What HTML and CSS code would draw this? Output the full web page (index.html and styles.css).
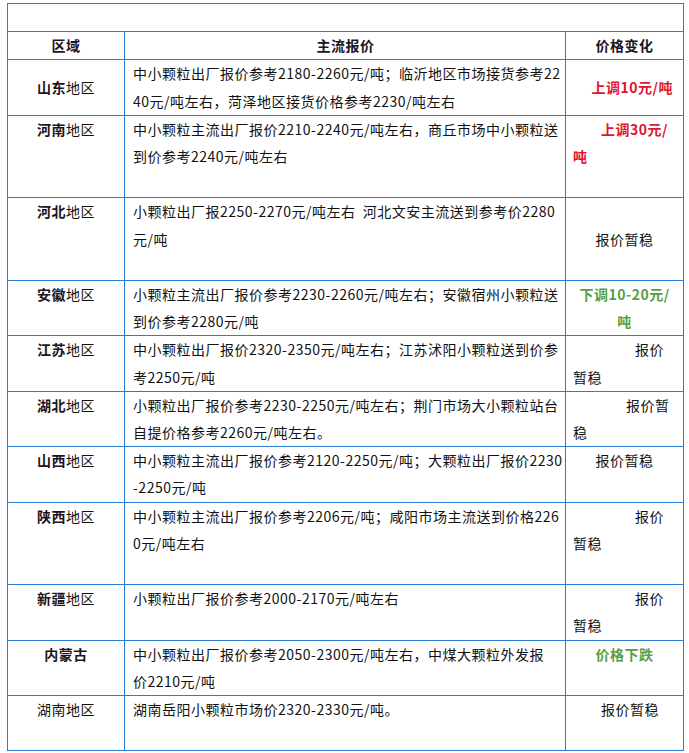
FILE: index.html
```html
<!DOCTYPE html>
<html lang="zh-CN">
<head>
<meta charset="utf-8">
<title>各地区价格</title>
<link rel="stylesheet" href="styles.css">
</head>
<body>
<table class="price">
  <colgroup>
    <col class="c1">
    <col class="c2">
    <col class="c3">
  </colgroup>
  <tr>
    <td class="title" colspan="3">&nbsp;</td>
  </tr>
  <tr class="head">
    <td class="reg">区域</td>
    <td class="main ctr">主流报价</td>
    <td class="chg ctr">价格变化</td>
  </tr>
  <tr class="mid">
    <td class="reg"><b>山东</b>地区</td>
    <td class="main">中小颗粒出厂报价参考2180-2260元/吨；临沂地区市场接货参考22<br>40元/吨左右，菏泽地区接货价格参考2230/吨左右</td>
    <td class="chg rgt up">上调10元/吨</td>
  </tr>
  <tr>
    <td class="reg"><b>河南</b>地区</td>
    <td class="main">中小颗粒主流出厂报价2210-2240元/吨左右，商丘市场中小颗粒送<br>到价参考2240元/吨左右<br>&nbsp;</td>
    <td class="chg ind2 up">上调30元/<br>吨</td>
  </tr>
  <tr>
    <td class="reg"><b>河北</b>地区</td>
    <td class="main">小颗粒出厂报2250-2270元/吨左右&nbsp; 河北文安主流送到参考价2280<br>元/吨<br>&nbsp;</td>
    <td class="chg ctr vmid">报价暂稳</td>
  </tr>
  <tr>
    <td class="reg"><b>安徽</b>地区</td>
    <td class="main">小颗粒主流出厂报价参考2230-2260元/吨左右；安徽宿州小颗粒送<br>到价参考2280元/吨</td>
    <td class="chg ctr down">下调10-20元/<br>吨</td>
  </tr>
  <tr>
    <td class="reg"><b>江苏</b>地区</td>
    <td class="main">中小颗粒出厂报价2320-2350元/吨左右；江苏沭阳小颗粒送到价参<br>考2250元/吨</td>
    <td class="chg ind4">报价<br>暂稳</td>
  </tr>
  <tr>
    <td class="reg"><b>湖北</b>地区</td>
    <td class="main">小颗粒出厂报价参考2230-2250元/吨左右；荆门市场大小颗粒站台<br>自提价格参考2260元/吨左右。</td>
    <td class="chg ind3">报价暂<br>稳</td>
  </tr>
  <tr>
    <td class="reg"><b>山西</b>地区</td>
    <td class="main">中小颗粒主流出厂报价参考2120-2250元/吨；大颗粒出厂报价2230<br>-2250元/吨</td>
    <td class="chg ctr">报价暂稳</td>
  </tr>
  <tr>
    <td class="reg"><b>陕西</b>地区</td>
    <td class="main">中小颗粒主流出厂报价参考2206元/吨；咸阳市场主流送到价格226<br>0元/吨左右<br>&nbsp;</td>
    <td class="chg ind4">报价<br>暂稳</td>
  </tr>
  <tr>
    <td class="reg"><b>新疆</b>地区</td>
    <td class="main">小颗粒出厂报价参考2000-2170元/吨左右</td>
    <td class="chg ind4">报价<br>暂稳</td>
  </tr>
  <tr>
    <td class="reg"><b>内蒙古</b></td>
    <td class="main">中小颗粒出厂报价参考2050-2300元/吨左右，中煤大颗粒外发报<br>价2210元/吨</td>
    <td class="chg ctr down">价格下跌</td>
  </tr>
  <tr>
    <td class="reg">湖南地区</td>
    <td class="main">湖南岳阳小颗粒市场价2320-2330元/吨。<br>&nbsp;</td>
    <td class="chg ind2">报价暂稳</td>
  </tr>
</table>
</body>
</html>
```

FILE: styles.css
```css
html, body {
  background: #ffffff;
}

body {
  margin: 3px 0 0 7px;
  font-family: "Noto Sans CJK SC", "Noto Sans", sans-serif;
  font-size: 14px;
  color: #111111;
}

.price {
  border-collapse: separate;
  border-spacing: 0;
  table-layout: fixed;
  width: 677px;
  border-top: 1px solid #2a7dd3;
  border-left: 1px solid #2a7dd3;
}

.price .c1 { width: 117px; }
.price .c2 { width: 441px; }
.price .c3 { width: 118px; }

.price td {
  border-right: 1px solid #2a7dd3;
  border-bottom: 1px solid #2a7dd3;
  padding: 0 7px;
  line-height: 27.2px;
  letter-spacing: 0.5px;
  vertical-align: top;
  white-space: nowrap;
}

.price .main {
  padding-left: 8px;
}

.price .reg {
  text-align: center;
}

.price .reg b,
.head td {
  font-weight: 700;
  color: #1d1420;
}

.mid td,
.price .vmid {
  vertical-align: middle;
}

.ctr { text-align: center; }

.price .rgt {
  text-align: right;
  padding-right: 10px;
}

.ind2 { text-indent: 28px; }
.ind3 { text-indent: 53px; }
.ind4 { text-indent: 62px; }

.up {
  color: #e0142c;
  font-weight: 700;
}

.down {
  color: #56a044;
  font-weight: 700;
}
```
